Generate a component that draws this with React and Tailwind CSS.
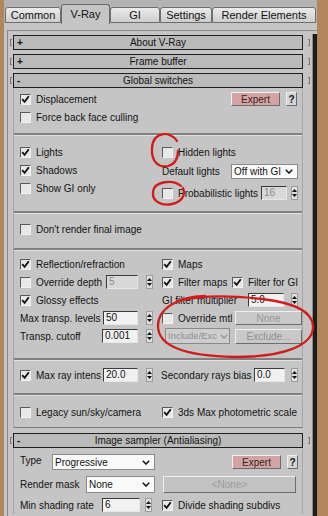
import React from "react";

// small pieces of the 3ds Max dialog chrome
const Tick = () => (
  <svg width="9" height="9" viewBox="0 0 9 9" className="block">
    <path d="M1.2 4.2 L3.6 6.9 L7.8 1.2" fill="none" stroke="#101010" strokeWidth="1.8" />
  </svg>
);

function Box({ on }) {
  return (
    <span className="flex h-[11px] w-[11px] shrink-0 items-center justify-center border border-t-[#5a5a5a] border-l-[#5a5a5a] border-r-[#f2f2f2] border-b-[#f2f2f2] bg-[#e8e8e8]">
      {on && <Tick />}
    </span>
  );
}

function Check({ on, label, className = "" }) {
  return (
    <div className={`flex items-center gap-[5px] ${className}`}>
      <Box on={on} />
      <span className="whitespace-nowrap">{label}</span>
    </div>
  );
}

function Arrows() {
  return (
    <span className="flex h-[14px] w-[7px] shrink-0 flex-col items-center justify-center gap-[2px] border border-[#9c9c9c] bg-[#dedede]">
      <svg width="5" height="3" viewBox="0 0 5 3" className="block">
        <path d="M0 3 L2.5 0 L5 3Z" fill="#111" />
      </svg>
      <svg width="5" height="3" viewBox="0 0 5 3" className="block">
        <path d="M0 0 L5 0 L2.5 3Z" fill="#111" />
      </svg>
    </span>
  );
}

function Spin({ value, w, off, gap = "gap-[8px]" }) {
  return (
    <div className={`flex items-center ${gap}`}>
      <div
        className={`flex h-[14px] items-center border border-t-[#3a3a3a] border-l-[#3a3a3a] border-r-[#e6e6e6] border-b-[#e6e6e6] pl-[2px] leading-none ${w} ${
          off ? "bg-[#d8d8d8] text-[#8c8c8c]" : "bg-[#f1f1f1]"
        }`}
      >
        {value}
      </div>
      <Arrows />
    </div>
  );
}

const Chev = ({ off }) => (
  <svg width="8" height="5" viewBox="0 0 8 5" className="block shrink-0">
    <path d="M0.8 0.8 L4 4 L7.2 0.8" fill="none" stroke={off ? "#9a9a9a" : "#1a1a1a"} strokeWidth="1.6" />
  </svg>
);

function Drop({ value, className = "", off }) {
  return (
    <div
      className={`flex items-center justify-between border border-[#8a8a8a] pl-[2px] ${
        off ? "bg-[#cecece] text-[#8e8e8e]" : "bg-[#fafafa]"
      } ${className}`}
    >
      <span className="whitespace-nowrap">{value}</span>
      <Chev off={off} />
    </div>
  );
}

function Btn({ children, className = "" }) {
  return (
    <div
      className={`flex items-center justify-center border border-t-[#efefef] border-l-[#efefef] border-r-[#6c6c6c] border-b-[#6c6c6c] whitespace-nowrap ${className}`}
    >
      {children}
    </div>
  );
}

function ExpertQ() {
  return (
    <div className="flex items-center gap-[6px]">
      <Btn className="h-[14px] w-[49px] bg-[#d4a4a4] text-[#3a1f1f]">Expert</Btn>
      <Btn className="h-[14px] w-[11px] bg-[#d4d4d4] font-bold">?</Btn>
    </div>
  );
}

const Sep = ({ className = "" }) => (
  <div className={`h-[3px] border-t-2 border-b border-t-[#808080] border-b-[#e2e2e2] ${className}`} />
);

function Header({ sign, title }) {
  return (
    <div className="flex h-[15px]">
      <div className="w-[5px] pl-[2px] py-[4px]">
        <div className="h-full w-[2px] border-y border-l border-[#777]" />
      </div>
      <div className="grid w-[290px] grid-cols-[24px_1fr_24px] items-center border border-[#1e1e1e] bg-[#bababa] leading-none">
        <span className="pl-[3px] font-bold">{sign}</span>
        <span className="text-center">{title}</span>
        <span />
      </div>
      <div className="flex w-[9px] justify-end pr-[2px] py-[4px]">
        <div className="h-full w-[2px] border-y border-r border-[#777]" />
      </div>
    </div>
  );
}

const tabs = [
  ["Common", "w-[56px]"],
  ["V-Ray", "w-[49px]"],
  ["GI", "w-[50px]"],
  ["Settings", "w-[52px]"],
  ["Render Elements", "w-[104px]"],
];

export default function App() {
  const row = "flex h-[18px] items-center";
  return (
    <div className="relative h-[516px] w-[328px] overflow-hidden bg-[#b3855c] font-['Liberation_Sans',Arial,sans-serif] text-[10px] text-[#131313]">
      <div className="ml-[4px] flex h-full w-[313px] flex-col bg-[#c5c5c5]">
        {/* tabs */}
        <div className="flex h-[23px] items-end bg-[#b2b2b2] pl-[1px]">
          {tabs.map(([t, w]) =>
            t === "V-Ray" ? (
              <div
                key={t}
                className={`${w} relative z-10 -mb-[1px] flex h-[20px] items-center justify-center rounded-t-[3px] border-x border-t border-[#6a6a6a] bg-[#c5c5c5] text-[11px]`}
              >
                {t}
              </div>
            ) : (
              <div
                key={t}
                className={`${w} flex h-[16px] items-center justify-center rounded-t-[3px] border border-[#6e6e6e] bg-linear-to-b from-[#ebebeb] to-[#cdcdcd] text-[11px]`}
              >
                {t}
              </div>
            )
          )}
        </div>
        <div className="h-[7px] shrink-0" />

        {/* scroll panel */}
        <div className="ml-[3px] flex flex-1 border-l border-t border-[#8a8a8a]">
          <div className="flex w-[304px] flex-col gap-[4px] pt-[4px]">
            <Header sign="+" title="About V-Ray" />
            <Header sign="+" title="Frame buffer" />

            <div className="flex flex-col">
              <Header sign="-" title="Global switches" />
              <div className="ml-[5px] w-[290px] border-x border-b border-x-[#a6a6a6] border-b-[#7c7c7c] pb-[6px] pt-[2px]">
                <div className="pl-[6px] pr-[5px]">
                  <div className={`${row} justify-between`}>
                    <Check on label="Displacement" />
                    <ExpertQ />
                  </div>
                  <div className={row}>
                    <Check label="Force back face culling" />
                  </div>
                </div>

                <Sep className="mt-[7px]" />

                <div className="mt-[7px] grid grid-cols-[142px_140px] pl-[6px]">
                  <div className="flex flex-col">
                    <div className={row}>
                      <Check on label="Lights" />
                    </div>
                    <div className={row}>
                      <Check on label="Shadows" />
                    </div>
                    <div className={row}>
                      <Check label="Show GI only" />
                    </div>
                  </div>
                  <div className="flex flex-col pr-[4px]">
                    <div className={row}>
                      <Check label="Hidden lights" />
                    </div>
                    <div className="flex h-[20px] items-center justify-between">
                      <span>Default lights</span>
                      <Drop value="Off with GI" className="h-[15px] w-[67px] pr-[4px]" />
                    </div>
                    <div className={`${row} mt-[3px] justify-between`}>
                      <Check label="Probabilistic lights" />
                      <Spin value="16" w="w-[26px]" off gap="gap-[4px]" />
                    </div>
                  </div>
                </div>

                <Sep className="mt-[9px]" />

                <div className="mt-[6px] pl-[6px]">
                  <div className={row}>
                    <Check label="Don't render final image" />
                  </div>
                </div>

                <Sep className="mt-[10px]" />

                <div className="mt-[4px] grid grid-cols-[142px_140px] pl-[6px]">
                  <div className="flex flex-col pr-[9px]">
                    <div className={row}>
                      <Check on label="Reflection/refraction" />
                    </div>
                    <div className={`${row} justify-between`}>
                      <Check label="Override depth" />
                      <Spin value="5" w="w-[32px]" off />
                    </div>
                    <div className={row}>
                      <Check on label="Glossy effects" />
                    </div>
                    <div className={`${row} justify-between`}>
                      <span>Max transp. levels</span>
                      <Spin value="50" w="w-[35px]" />
                    </div>
                    <div className={`${row} justify-between`}>
                      <span>Transp. cutoff</span>
                      <Spin value="0.001" w="w-[36px]" />
                    </div>
                  </div>
                  <div className="flex flex-col">
                    <div className={row}>
                      <Check on label="Maps" />
                    </div>
                    <div className={row}>
                      <Check on label="Filter maps" className="w-[70px]" />
                      <Check on label="Filter for GI" />
                    </div>
                    <div className={`${row} justify-between pr-[4px]`}>
                      <span>GI filter multiplier</span>
                      <Spin value="5.0" w="w-[36px]" gap="gap-[7px]" />
                    </div>
                    <div className={`${row} justify-between`}>
                      <Check label="Override mtl" />
                      <Btn className="h-[14px] w-[67px] bg-[#c9c9c9] text-[#979797]">None</Btn>
                    </div>
                    <div className={`${row} justify-between`}>
                      <Drop value="Include/Exc" off className="ml-[3px] h-[16px] w-[65px] pr-[1px] text-[9.5px]" />
                      <Btn className="h-[15px] w-[67px] bg-[#c9c9c9] text-[#8f8f8f]">Exclude...</Btn>
                    </div>
                  </div>
                </div>

                <Sep className="mt-[13px]" />

                <div className="mt-[5px] grid grid-cols-[142px_140px] pl-[6px]">
                  <div className={`${row} justify-between pr-[9px]`}>
                    <Check on label="Max ray intens" />
                    <Spin value="20.0" w="w-[35px]" />
                  </div>
                  <div className={`${row} justify-between pr-[4px]`}>
                    <span className="-ml-[1px]">Secondary rays bias</span>
                    <Spin value="0.0" w="w-[31px]" gap="gap-[6px]" />
                  </div>
                </div>

                <Sep className="mt-[9px]" />

                <div className="mt-[7px] grid grid-cols-[142px_140px] pl-[6px]">
                  <div className={row}>
                    <Check label="Legacy sun/sky/camera" />
                  </div>
                  <div className={row}>
                    <Check on label="3ds Max photometric scale" />
                  </div>
                </div>
              </div>
            </div>

            <div className="mt-[1px] flex flex-col">
              <Header sign="-" title="Image sampler (Antialiasing)" />
              <div className="ml-[5px] w-[290px] flex-1 border-x border-[#a6a6a6] pl-[6px] pr-[4px] pt-[4px]">
                <div className="flex h-[20px] items-center">
                  <span className="-mt-[3px] w-[32px]">Type</span>
                  <Drop value="Progressive" className="h-[16px] w-[103px] pr-[4px]" />
                  <div className="ml-auto">
                    <ExpertQ />
                  </div>
                </div>
                <div className="mt-[3px] flex h-[19px] items-center">
                  <span className="w-[66px]">Render mask</span>
                  <Drop value="None" className="h-[17px] w-[69px] pr-[4px]" />
                  <Btn className="ml-[8px] h-[17px] w-[133px] bg-[#c2c2c2] text-[#9c9c9c]">&lt;None&gt;</Btn>
                </div>
                <div className="mt-[2px] flex h-[18px] items-center">
                  <span className="w-[82px]">Min shading rate</span>
                  <Spin value="6" w="w-[38px]" gap="gap-[5px]" />
                  <Check on label="Divide shading subdivs" className="ml-[10px]" />
                </div>
              </div>
            </div>
          </div>
          {/* scrollbar strip */}
          <div className="mt-[3px] w-[5px] border-l border-[#8c8c8c] bg-[#1c1c1c]" />
        </div>
      </div>

      {/* red hand-drawn annotations over the dialog */}
      <svg
        className="pointer-events-none absolute inset-0"
        width="328"
        height="516"
        viewBox="0 0 328 516"
        fill="none"
        stroke="#d21c1c"
        strokeWidth="2.3"
        strokeLinecap="round"
      >
        <path d="M177 141 C171 131 153 131 152 148 C151 162 159 168 168 166 C175 164 178 158 178 151" />
        <path d="M181 186 C173 179 154 181 153 192 C152 202 162 206 172 204 C181 202 186 196 183 188" />
        <path d="M205 296 C178 297 158 308 158 326 C158 345 181 356 235 357 C285 357 312 345 313 328 C314 312 296 303 262 299 C236 296 206 294 178 301" />
      </svg>
    </div>
  );
}
